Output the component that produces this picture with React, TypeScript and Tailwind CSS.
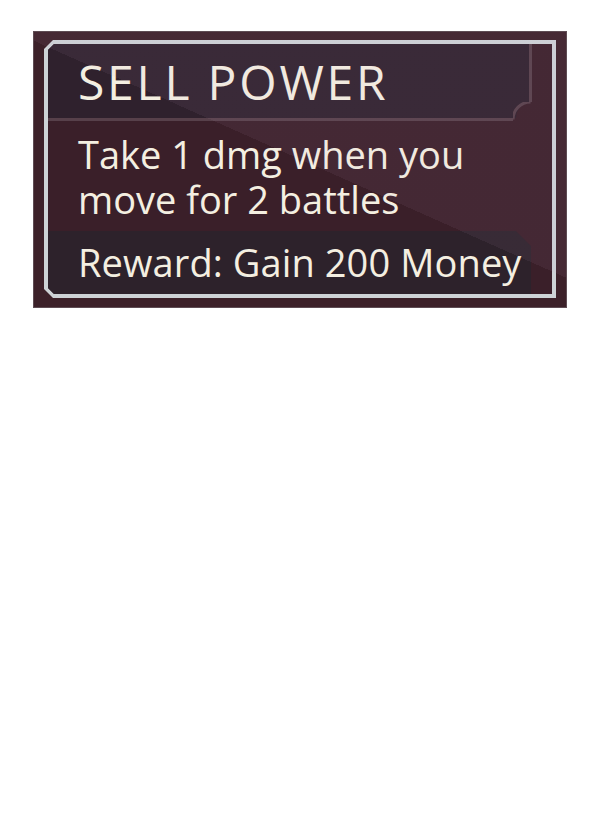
import React from "react";

export default function App() {
  return (
    <div className="w-[600px] h-[840px] bg-white pt-[31px] pl-[33px]" style={{ fontFamily: '"Open Sans", "Noto Sans", sans-serif' }}>
      <div className="relative w-[534px] h-[277px] bg-[#3c2129] border border-[#5e4c53] pt-[8px] pl-[10px] pr-[10px] pb-[9px]">
        <div className="w-[512px] h-[258px] bg-[#cdd3d6] p-[4px] [clip-path:polygon(9px_0,100%_0,100%_100%,9px_100%,0_calc(100%-9px),0_9px)]">
          <div className="w-[504px] h-[250px] flex flex-col bg-[#3a1f29] [clip-path:polygon(6px_0,100%_0,100%_100%,6px_100%,0_calc(100%-6px),0_6px)]">
            <div className="relative w-[484px] h-[77px] shrink-0 bg-[#2f212d] border-r-[3px] border-b-[3px] border-[#57404a] pl-[30px] pt-[14px]">
              <div className="text-[#f4efe1] text-[48px] leading-none tracking-[2.8px]">SELL POWER</div>
              <svg className="absolute right-[-3px] bottom-[-3px]" width="19" height="19" viewBox="0 0 19 19">
                <path d="M19 0 A16 16 0 0 0 3 16 L0 16 L0 19 L19 19 Z" fill="#3a1f29" />
                <path d="M17.5 0 A17.5 17.5 0 0 0 0 17.5" fill="none" stroke="#57404a" strokeWidth="3" />
              </svg>
            </div>
            <div className="h-[110px] shrink-0 pl-[30px] pt-[12px] text-[#f4efe1] text-[38px] flex flex-col gap-[3px]">
              <div className="leading-[42px] h-[42px]">Take 1 dmg when you</div>
              <div className="leading-[42px] h-[42px]">move for 2 battles</div>
            </div>
            <div className="w-[483px] flex-1 bg-[#2d222b] pl-[30px] pt-[9px] text-[#f4efe1] text-[38px] leading-[45px] tracking-[0.1px] [clip-path:polygon(0_0,calc(100%-15px)_0,100%_15px,100%_100%,0_100%)]">
              <div>Reward: Gain 200 Money</div>
            </div>
          </div>
        </div>
        <div className="pointer-events-none absolute inset-0 bg-[linear-gradient(24deg,transparent_52%,rgba(200,160,200,0.07)_52%)]" />
      </div>
    </div>
  );
}
